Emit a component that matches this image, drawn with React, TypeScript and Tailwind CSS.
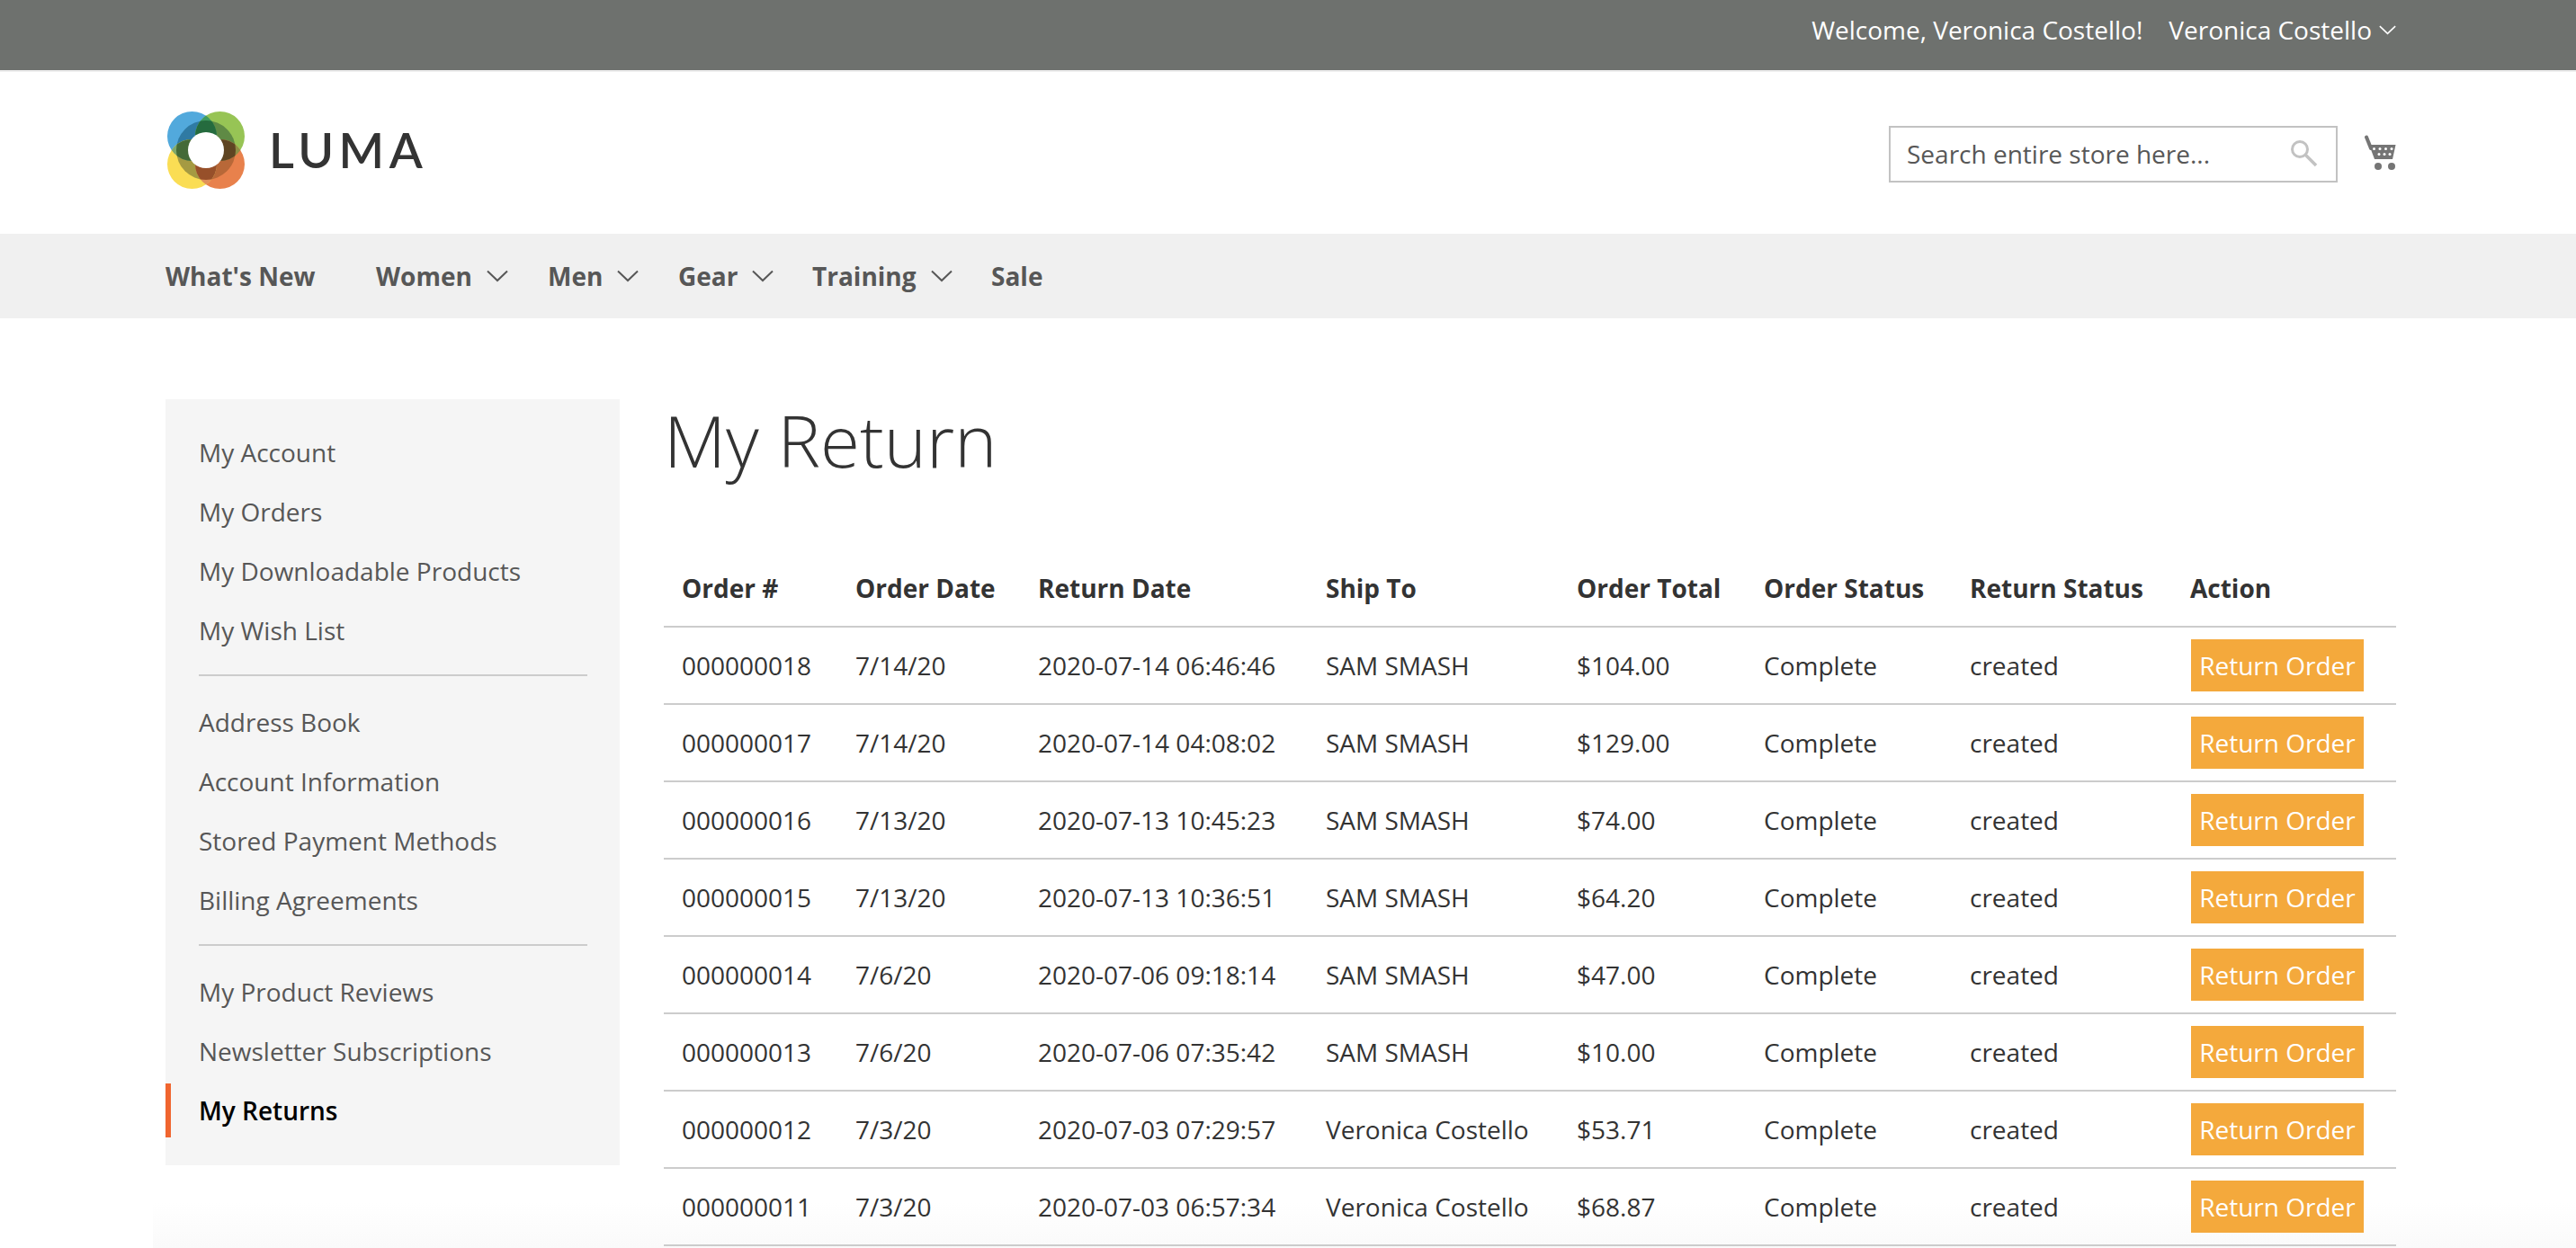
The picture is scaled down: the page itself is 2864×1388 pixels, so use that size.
const font = "font-['Open_Sans',sans-serif]";

interface ReturnRow {
  order: string;
  date: string;
  returned: string;
  shipTo: string;
  total: string;
}

const rows: ReturnRow[] = [
  { order: '000000018', date: '7/14/20', returned: '2020-07-14 06:46:46', shipTo: 'SAM SMASH', total: '$104.00' },
  { order: '000000017', date: '7/14/20', returned: '2020-07-14 04:08:02', shipTo: 'SAM SMASH', total: '$129.00' },
  { order: '000000016', date: '7/13/20', returned: '2020-07-13 10:45:23', shipTo: 'SAM SMASH', total: '$74.00' },
  { order: '000000015', date: '7/13/20', returned: '2020-07-13 10:36:51', shipTo: 'SAM SMASH', total: '$64.20' },
  { order: '000000014', date: '7/6/20', returned: '2020-07-06 09:18:14', shipTo: 'SAM SMASH', total: '$47.00' },
  { order: '000000013', date: '7/6/20', returned: '2020-07-06 07:35:42', shipTo: 'SAM SMASH', total: '$10.00' },
  { order: '000000012', date: '7/3/20', returned: '2020-07-03 07:29:57', shipTo: 'Veronica Costello', total: '$53.71' },
  { order: '000000011', date: '7/3/20', returned: '2020-07-03 06:57:34', shipTo: 'Veronica Costello', total: '$68.87' },
];

const sidebarGroups = [
  ['My Account', 'My Orders', 'My Downloadable Products', 'My Wish List'],
  ['Address Book', 'Account Information', 'Stored Payment Methods', 'Billing Agreements'],
  ['My Product Reviews', 'Newsletter Subscriptions'],
];

function Chevron({ className }: { className: string }) {
  return (
    <svg className={className} viewBox="0 0 24 14" fill="none" stroke="currentColor" strokeWidth="2">
      <path d="M1 1.5 L12 12 L23 1.5" />
    </svg>
  );
}

function Logo() {
  const petals = [
    { id: 'b', cx: 27.5, cy: 27.5, fill: '#52a9dc', ring: '#2f7aa3' },
    { id: 'g', cx: 58.5, cy: 27.5, fill: '#97c455', ring: '#5f8a45' },
    { id: 'o', cx: 58.5, cy: 58.5, fill: '#e8814c', ring: '#b86838' },
    { id: 'y', cx: 27.5, cy: 58.5, fill: '#fadd54', ring: '#a59a42' },
  ];
  const lenses = [
    { a: 'b', b: 'g', tip: '#3f9a5f', dark: '#256b3e' },
    { a: 'g', b: 'o', tip: '#8f8f45', dark: '#5f4523' },
    { a: 'o', b: 'y', tip: '#e0905a', dark: '#97502a' },
    { a: 'y', b: 'b', tip: '#7fa86a', dark: '#446a38' },
  ];
  return (
    <svg className="w-[86px] h-[86px]" viewBox="0 0 86 86">
      <defs>
        {petals.map((p) => (
          <clipPath key={p.id} id={`luma-${p.id}`}>
            <circle cx={p.cx} cy={p.cy} r="27.5" />
          </clipPath>
        ))}
      </defs>
      {petals.map((p) => (
        <g key={p.id}>
          <circle cx={p.cx} cy={p.cy} r="27.5" fill={p.fill} />
          <g clipPath={`url(#luma-${p.id})`}>
            <circle cx="43" cy="43" r="33" fill={p.ring} />
          </g>
        </g>
      ))}
      {lenses.map((l) => (
        <g key={l.a} clipPath={`url(#luma-${l.a})`}>
          <g clipPath={`url(#luma-${l.b})`}>
            <rect width="86" height="86" fill={l.tip} />
            <circle cx="43" cy="43" r="33" fill={l.dark} />
          </g>
        </g>
      ))}
      <circle cx="43" cy="43" r="20" fill="#fff" />
    </svg>
  );
}

function CartIcon() {
  return (
    <svg className="w-[36px] h-[40px] text-[#757575]" viewBox="0 0 36 40" fill="currentColor">
      <path d="M3 2.5 L8 15" fill="none" stroke="currentColor" strokeWidth="4" strokeLinecap="round" />
      <path d="M6 11 L35.5 11 L32 27 L12 27 Z" />
      <g fill="#fff">
        <circle cx="11.5" cy="15.5" r="1.5" />
        <circle cx="18" cy="15.5" r="1.5" />
        <circle cx="24.5" cy="15.5" r="1.5" />
        <circle cx="31" cy="15.5" r="1.5" />
        <circle cx="17" cy="21.5" r="1.5" />
        <circle cx="23" cy="21.5" r="1.5" />
        <circle cx="29" cy="21.5" r="1.5" />
      </g>
      <circle cx="16" cy="35" r="4" />
      <circle cx="31" cy="35" r="4" />
    </svg>
  );
}

function NavItem({ label, hasMenu, className }: { label: string; hasMenu?: boolean; className: string }) {
  return (
    <div className={`flex items-center ${className}`}>
      <span>{label}</span>
      {hasMenu && <Chevron className="ml-[16px] w-[24px] h-[14px] text-[#575757]" />}
    </div>
  );
}

export default function App() {
  return (
    <div className={`relative h-[1388px] overflow-hidden bg-white text-[28px] text-[#333] ${font}`}>
      <div className="absolute left-[170px] right-0 bottom-0 h-[50px] bg-gradient-to-b from-white to-[#fafafa]" />
      <div className="relative">
        <div className="h-[78px] bg-[#6e716e] flex items-center justify-end pr-[200px] pb-[12px] text-white">
          <span>Welcome, Veronica Costello!</span>
          <span className="ml-[29px]">Veronica Costello</span>
          <Chevron className="ml-[8px] w-[19px] h-[11px]" />
        </div>
        <div className="h-[2px] bg-[#eeeeee]" />

        <header className="h-[180px] flex items-center justify-between pl-[186px] pr-[200px]">
          <div className="flex items-center -mt-[6px]">
            <Logo />
            <span className="ml-[27px] font-['Lato',sans-serif] font-semibold text-[54px] leading-none tracking-[5.5px] text-[#333]">
              LUMA
            </span>
          </div>
          <div className="flex items-center mt-[2px]">
            <div className="w-[499px] h-[63px] border-2 border-[#c2c2c2] flex items-center justify-between pl-[18px] pr-[20px] text-[#575757]">
              <span>Search entire store here...</span>
              <svg className="w-[30px] h-[30px]" viewBox="0 0 30 30" fill="none" stroke="#c2c2c2" strokeWidth="3">
                <circle cx="10" cy="10" r="8.5" />
                <path d="M16 16 L28 28" strokeWidth="3.5" />
              </svg>
            </div>
            <div className="ml-[29px] -mt-[3px]">
              <CartIcon />
            </div>
          </div>
        </header>

        <nav className="h-[94px] bg-[#f0f0f0] flex items-center pl-[184px] font-bold text-[#575757]">
          <NavItem label="What's New" className="w-[234px]" />
          <NavItem label="Women" hasMenu className="w-[191px]" />
          <NavItem label="Men" hasMenu className="w-[145px]" />
          <NavItem label="Gear" hasMenu className="w-[149px]" />
          <NavItem label="Training" hasMenu className="w-[199px]" />
          <NavItem label="Sale" className="" />
        </nav>

        <main className="flex pt-[90px] pl-[184px] pr-[200px]">
          <aside className="w-[505px] h-[852px] shrink-0 bg-[#f5f5f5] pt-[26px] text-[#575757]">
            {sidebarGroups.map((group, i) => (
              <div key={i}>
                {i > 0 && <div className="ml-[37px] mr-[36px] mt-[16px] mb-[18px] h-[2px] bg-[#cccccc]" />}
                {group.map((item) => (
                  <div key={item} className="h-[66px] flex items-center pl-[37px]">
                    {item}
                  </div>
                ))}
              </div>
            ))}
            <div className="relative h-[66px] flex items-center pl-[37px] font-semibold text-black">
              <div className="absolute left-0 top-[3px] w-[6px] h-[60px] bg-[#f0652f]" />
              My Returns
            </div>
          </aside>

          <section className="ml-[49px] flex-1">
            <h1 className="font-light text-[80px] leading-[90px] text-[#333] h-[170px]">My Return</h1>
            <table className="w-[1926px] table-fixed border-collapse">
              <colgroup>
                <col className="w-[193px]" />
                <col className="w-[203px]" />
                <col className="w-[320px]" />
                <col className="w-[279px]" />
                <col className="w-[208px]" />
                <col className="w-[229px]" />
                <col className="w-[245px]" />
                <col className="w-[249px]" />
              </colgroup>
              <thead>
                <tr className="h-[83px] border-b-2 border-[#cccccc] text-left font-bold">
                  {['Order #', 'Order Date', 'Return Date', 'Ship To', 'Order Total', 'Order Status', 'Return Status', 'Action'].map((h) => (
                    <th key={h} className="pl-[20px] pb-[2px] font-bold align-middle whitespace-nowrap">{h}</th>
                  ))}
                </tr>
              </thead>
              <tbody>
                {rows.map((r) => (
                  <tr key={r.order} className="h-[86px] border-b-2 border-[#cccccc]">
                    <td className="pl-[20px]">{r.order}</td>
                    <td className="pl-[20px]">{r.date}</td>
                    <td className="pl-[20px] whitespace-nowrap">{r.returned}</td>
                    <td className="pl-[20px] whitespace-nowrap">{r.shipTo}</td>
                    <td className="pl-[20px]">{r.total}</td>
                    <td className="pl-[20px]">Complete</td>
                    <td className="pl-[20px]">created</td>
                    <td className="pl-[21px]">
                      <div className="w-[192px] h-[58px] bg-[#f4a93c] text-white flex items-center justify-center">
                        Return Order
                      </div>
                    </td>
                  </tr>
                ))}
              </tbody>
            </table>
          </section>
        </main>
      </div>
    </div>
  );
}
